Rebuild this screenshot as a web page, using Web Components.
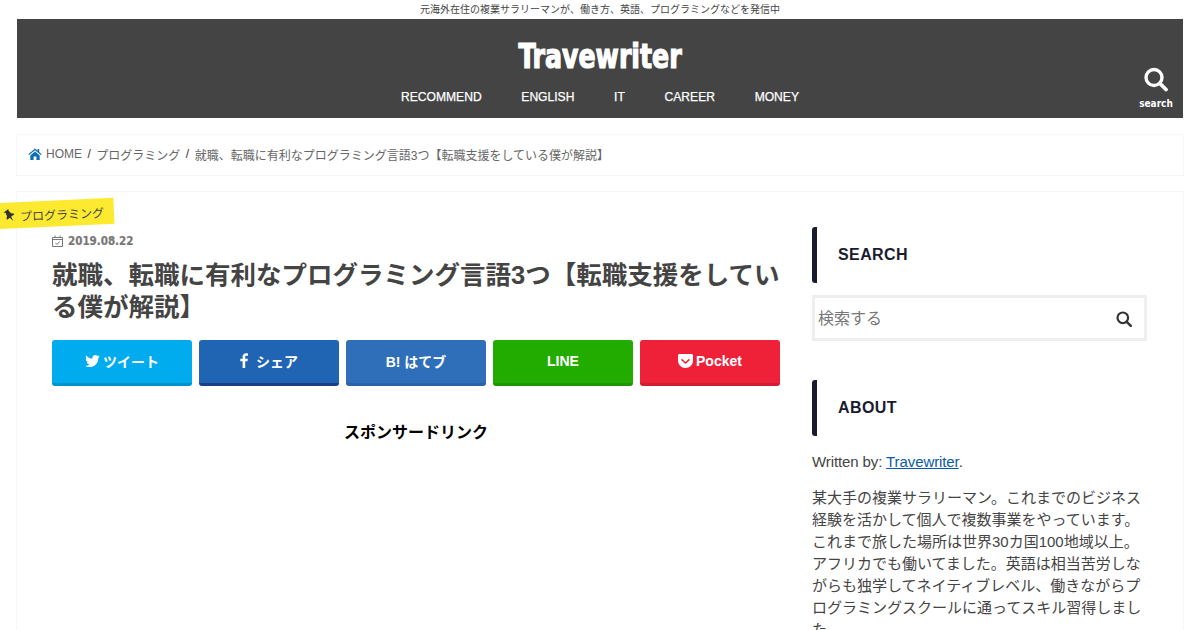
<!DOCTYPE html>
<html lang="ja">
<head>
<meta charset="utf-8">
<title>Travewriter</title>
<style>
    html, body {
        margin: 0;
        height: 630px;
        overflow: hidden;
        background: #fff;
        font-family: "Liberation Sans", "Noto Sans CJK JP", sans-serif;
        color: #444;
    }
</style>
</head>
<body>
<site-header></site-header>
<bread-crumbs></bread-crumbs>
<page-main>
    <post-article></post-article>
    <side-bar slot="side"></side-bar>
</page-main>

<script>
const stacks = '"Liberation Sans", "Noto Sans CJK JP", sans-serif'

const mount = (el, html) => {
    el.attachShadow({ mode: 'open' }).innerHTML = html
}

customElements.define('site-header', class extends HTMLElement {
    constructor() {
        super()
        mount(this, `
        <style>
            :host { display: block; font-family: ${stacks}; }
            .tagline { height: 19px; line-height: 19px; font-size: 10px; text-align: center; color: #444; }
            .bar {
                margin: 0 17px;
                height: 99px;
                background: #444;
                color: #fff;
                display: flex;
                flex-direction: column;
                align-items: center;
                position: relative;
            }
            .logo {
                margin-top: 20px;
                height: 36px;
                line-height: 36px;
                font-family: "DejaVu Sans", sans-serif;
                font-stretch: condensed;
                font-weight: 700;
                font-size: 33px;
                transform: scaleX(0.85);
                -webkit-text-stroke: 1.2px #fff;
            }
            nav { display: flex; gap: 39.7px; margin-top: 15px; font-size: 12.1px; line-height: 14px; -webkit-text-stroke: 0.25px #fff; }
            .search {
                position: absolute;
                right: 10px;
                bottom: 8px;
                width: 34px;
                display: flex;
                flex-direction: column;
                align-items: center;
                font-family: "DejaVu Sans", sans-serif;
                font-stretch: condensed;
                font-size: 10px;
                font-weight: 700;
                line-height: 12px;
            }
            .search svg { display: block; margin-bottom: 6px; }
        </style>
        <div class="tagline">元海外在住の複業サラリーマンが、働き方、英語、プログラミングなどを発信中</div>
        <div class="bar">
            <div class="logo">Travewriter</div>
            <nav><span>RECOMMEND</span><span>ENGLISH</span><span>IT</span><span>CAREER</span><span>MONEY</span></nav>
            <div class="search">
                <svg width="24" height="25" viewBox="0 0 24 25"><circle cx="10" cy="10.5" r="8" fill="none" stroke="#fff" stroke-width="3.4"/><path d="M16 16.500l6 6" stroke="#fff" stroke-width="3.8" stroke-linecap="round"/></svg>
                <span>search</span>
            </div>
        </div>`)
    }
})

customElements.define('bread-crumbs', class extends HTMLElement {
    constructor() {
        super()
        mount(this, `
        <style>
            :host {
                display: flex;
                align-items: center;
                gap: 5px;
                box-sizing: border-box;
                margin: 16px 16px 15px;
                height: 42px;
                padding: 0 10px 2px 11px;
                border: 1px solid #f7f7f7;
                font-family: ${stacks};
                font-size: 12px;
                color: #666;
            }
            svg { display: block; margin-right: -1px; }
            .s { color: #333; margin: 0 .5px; }
        </style>
        <svg width="14" height="12" viewBox="0 0 14 12"><path fill="#0b6cb8" d="M7 0.500L0.300 6.200l.8.900L7 2.200l5.900 4.900.8-.9-2.500-2.100V1h-1.600v1.700zM2.300 7.400V12h3.300V8.500h2.800V12h3.300V7.400L7 3.500z"/></svg>
        <span>HOME</span><span class="s">/</span><span>プログラミング</span><span class="s">/</span>
        <span>就職、転職に有利なプログラミング言語3つ【転職支援をしている僕が解説】</span>`)
    }
})

customElements.define('page-main', class extends HTMLElement {
    constructor() {
        super()
        mount(this, `
        <style>
            :host {
                display: flex;
                box-sizing: border-box;
                margin: 0 16px;
                height: 500px;
                padding: 35px 36px 0 35px;
                gap: 32px;
                border: 1px solid #f7f7f7;
                position: relative;
            }
            .tag {
                position: absolute;
                left: -45px;
                top: 9px;
                width: 142px;
                height: 26px;
                padding-left: 31px;
                box-sizing: border-box;
                display: flex;
                align-items: center;
                gap: 4px;
                background: #fde92f;
                transform: rotate(-2.6deg);
                font-family: ${stacks};
                font-size: 12px;
                color: #444;
            }
        </style>
        <div class="tag">
            <svg width="13" height="14" viewBox="0 0 13 14"><path fill="#333" d="M3.300 1h6l-.9 1.300.7 3.700 1.900 1.800v1H7.300L6.400 13.500 5.500 9H2.100V8l1.900-1.800.7-3.700z" transform="rotate(-32 6.500 7)"/></svg>
            <span>プログラミング</span>
        </div>
        <slot></slot>
        <slot name="side"></slot>`)
    }
})

customElements.define('share-button', class extends HTMLElement {
    constructor() {
        super()
        mount(this, `
        <style>
            :host {
                display: flex;
                align-items: center;
                justify-content: center;
                gap: 3px;
                box-sizing: border-box;
                height: 46px;
                padding-bottom: 2px;
                border-radius: 3px;
                border-bottom: 3px solid var(--edge);
                background: var(--bg);
                color: #fff;
                font-family: ${stacks};
                font-size: 14px;
                font-weight: 700;
            }
        </style>
        <slot></slot>`)
    }
})

customElements.define('post-article', class extends HTMLElement {
    constructor() {
        super()
        mount(this, `
        <style>
            :host { display: block; width: 728px; flex: none; font-family: ${stacks}; color: #444; }
            .date {
                display: flex;
                align-items: center;
                gap: 5px;
                height: 14px;
                margin-top: 7px;
                font-family: "DejaVu Sans", sans-serif;
                font-stretch: condensed;
                font-size: 11.5px;
                font-weight: 700;
                color: #777;
                -webkit-text-stroke: 0.2px #777;
            }
            h1 { margin: 11px 0 17px; font-size: 25.5px; line-height: 32px; font-weight: 700; color: #444; }
            .share { display: grid; grid-template-columns: repeat(5, 140px); gap: 7px; }
            .tw { --bg: #00acee; --edge: #0092ca; }
            .fb { --bg: #2064b4; --edge: #1c3f84; }
            .hb { --bg: #2f6fba; --edge: #2a64a8; }
            .ln { --bg: #23ac00; --edge: #1f9600; }
            .pk { --bg: #ee2139; --edge: #d01d32; }
            .sponsor { margin-top: 37px; text-align: center; font-size: 16px; line-height: 20px; font-weight: 700; color: #000; }
        </style>
        <div class="date">
            <svg width="11" height="12" viewBox="0 0 11 12"><path fill="none" stroke="#777" d="M.5 2.500h10v9H.5zM.5 4.500h10M3 .5v2M8 .5v2M3.500 8l1.500 1.500 2.500-3"/></svg>
            <span>2019.08.22</span>
        </div>
        <h1>就職、転職に有利なプログラミング言語3つ【転職支援をしている僕が解説】</h1>
        <div class="share">
            <share-button class="tw"><svg width="15" height="12" viewBox="0 0 15 12"><path fill="#fff" d="M14.800 1.500c-.5.2-1.100.4-1.700.5.6-.4 1.100-1 1.300-1.700-.6.3-1.200.6-1.900.7C11.900.4 11.100 0 10.300 0 8.600 0 7.300 1.400 7.300 3c0 .2 0 .5.100.7C4.900 3.600 2.700 2.400 1.200.5.900 1 .8 1.500.8 2c0 1 .5 2 1.300 2.500-.5 0-1-.2-1.400-.4 0 1.500 1 2.700 2.400 3-.5.100-1 .2-1.400.100.400 1.200 1.500 2 2.800 2.100C3.500 10.600 1.800 11.100 0 10.900 1.300 11.700 2.900 12 4.600 12c5.600 0 8.700-4.600 8.700-8.600v-.4c.6-.4 1.100-.9 1.500-1.500z"/></svg><span>ツイート</span></share-button>
            <share-button class="fb"><svg width="8" height="15" viewBox="0 0 8 15" style="margin-right:5px"><path fill="#fff" d="M5.200 15V8.300h2.300l.3-2.600H5.200V4c0-.8.2-1.300 1.300-1.300H8V.4C7.700.3 6.900.2 6 .2 4 .2 2.600 1.400 2.600 3.700v2H.3v2.600h2.300V15z"/></svg><span>シェア</span></share-button>
            <share-button class="hb"><span>B! はてブ</span></share-button>
            <share-button class="ln"><span>LINE</span></share-button>
            <share-button class="pk"><svg width="15" height="14" viewBox="0 0 15 14"><path fill="#fff" d="M1.500 0h12C14.400 0 15 .6 15 1.500V6.500C15 10.600 11.600 14 7.500 14S0 10.600 0 6.500V1.500C0 .6.600 0 1.500 0zM4 4.800L3 5.900l4.500 4.200L12 5.900l-1-1.100-3.500 3.300z"/></svg><span>Pocket</span></share-button>
        </div>
        <div class="sponsor">スポンサードリンク</div>`)
    }
})

customElements.define('side-widget', class extends HTMLElement {
    constructor() {
        super()
        mount(this, `
        <style>
            :host { display: block; }
            h2 {
                box-sizing: border-box;
                margin: 0;
                height: 56px;
                display: flex;
                align-items: center;
                padding-left: 21px;
                border-left: 5px solid #1b1b2f;
                border-radius: 3px 0 0 3px;
                font-family: ${stacks};
                font-size: 16px;
                letter-spacing: 0.4px;
                font-weight: 700;
                color: #1b1b2f;
            }
        </style>
        <h2></h2>
        <slot></slot>`)
        this.shadowRoot.querySelector('h2').textContent = this.getAttribute('title')
    }
})

customElements.define('side-bar', class extends HTMLElement {
    constructor() {
        super()
        mount(this, `
        <style>
            :host { display: block; width: 335px; flex: none; font-family: ${stacks}; font-size: 15px; line-height: 22px; color: #444; }
            .box {
                box-sizing: border-box;
                height: 46px;
                margin: 12px 0 39px;
                border: 3px solid #eee;
                display: flex;
                align-items: center;
                justify-content: space-between;
                padding: 1px 12px 0 3px;
                font-size: 16px;
                color: #777;
            }
            p { margin: 0 0 14px; }
            p.first { margin-top: 15px; letter-spacing: -0.1px; }
            a { color: #0b5aa8; text-decoration: underline; }
        </style>
        <side-widget title="SEARCH">
            <div class="box">
                <span>検索する</span>
                <svg width="16" height="16" viewBox="0 0 16 16"><circle cx="6.800" cy="6.800" r="5.300" fill="none" stroke="#333" stroke-width="2.200"/><path d="M10.800 10.800l4 4" stroke="#333" stroke-width="2.400" stroke-linecap="round"/></svg>
            </div>
        </side-widget>
        <side-widget title="ABOUT">
            <p class="first">Written by: <a>Travewriter</a>.</p>
            <p>某大手の複業サラリーマン。これまでのビジネス経験を活かして個人で複数事業をやっています。これまで旅した場所は世界30カ国100地域以上。アフリカでも働いてました。英語は相当苦労しながらも独学してネイティブレベル、働きながらプログラミングスクールに通ってスキル習得しました。</p>
        </side-widget>`)
    }
})
</script>
</body>
</html>
